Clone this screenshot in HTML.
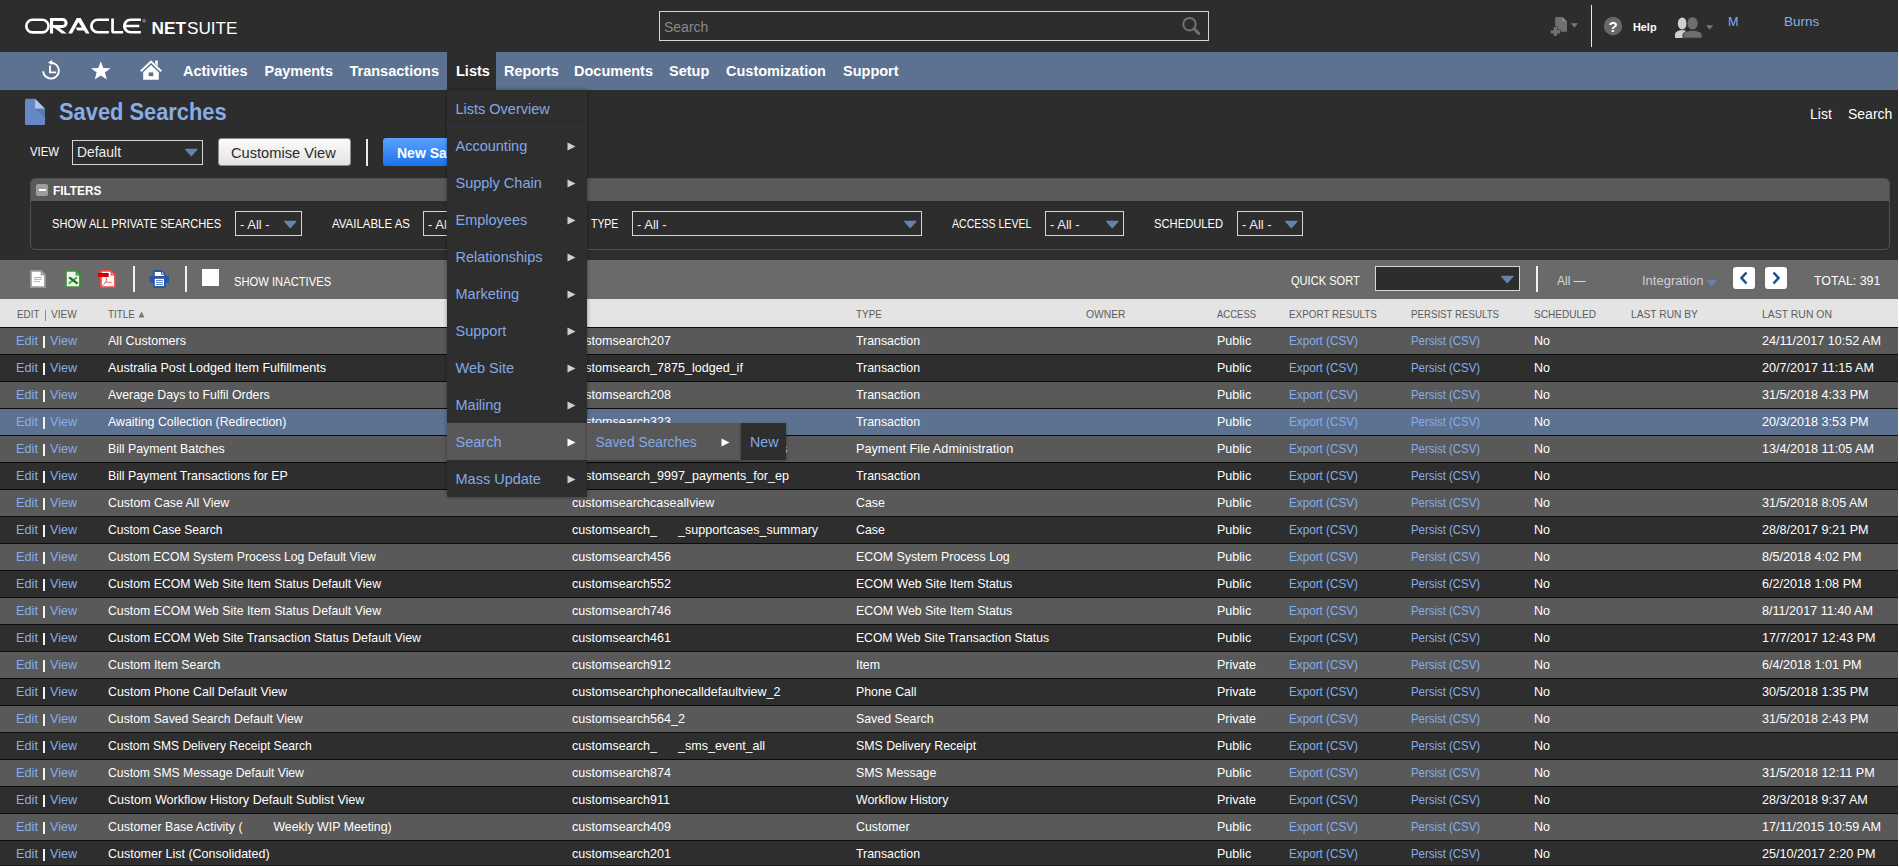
<!DOCTYPE html>
<html><head><meta charset="utf-8"><title>Saved Searches</title>
<style>
html,body{margin:0;padding:0}
body{width:1899px;height:867px;overflow:hidden;position:relative;background:#2d2d2d;font-family:'Liberation Sans', sans-serif}
.t{position:absolute;white-space:pre}
.r{position:absolute;box-sizing:content-box}
</style></head><body>
<svg class="r" style="left:0;top:0" width="260" height="52" viewBox="0 0 260 52">
<rect x="26.3" y="19.8" width="22.2" height="12.6" rx="6.3" fill="none" stroke="#fff" stroke-width="2.6"/>
<g fill="#fff">
<path fill-rule="evenodd" d="M50 18H62.55A5.05 5.05 0 0 1 62.55 28.1H53.1V33.4H50z M53.1 21V25.1H62.55A2.05 2.05 0 0 0 62.55 21z"/>
<path d="M54.6 28.1H59.5L66.8 33.4H61.8z"/>
<path d="M68.2 33.4L76.8 18H80.7L89.5 33.4H85.9L78.4 22L72.1 33.4z"/>
<path d="M75.7 27.6H82.5L84.5 30.6H77.3z"/>
<path d="M108.9 18.5h-11.4a7.5 7.5 0 0 0 0 15h11.4v-2.6h-11.2a4.9 4.9 0 0 1 0 -9.8h11.2z"/>
<path d="M111.2 18.5h2.7v12.4h9.2v2.6h-9.9a2 2 0 0 1 -2 -2z"/>
<path d="M140.9 18.5h-10.5a7.5 7.5 0 0 0 0 15h10.5v-2.6h-10.2a4.9 4.9 0 0 1 -4.6 -3.7h13.2v-2.4h-13.2a4.9 4.9 0 0 1 4.6 -3.7h10.2z"/>
</g>
<circle cx="144.1" cy="20.8" r="1.3" fill="none" stroke="#fff" stroke-width="0.5"/>
<text x="151.5" y="33.5" font-family="Liberation Sans" font-weight="bold" font-size="17.4" fill="#fff" textLength="34.5" lengthAdjust="spacingAndGlyphs">NET</text>
<text x="187" y="33.5" font-family="Liberation Sans" font-size="17.4" fill="#fff" textLength="50.5" lengthAdjust="spacingAndGlyphs">SUITE</text>
</svg>
<div class="r" style="left:659px;top:11px;width:548px;height:28px;background:transparent;border:1px solid #d6d6d6;"></div>
<div class="t" style="left:664px;top:20px;font-size:14px;line-height:14px;color:#8a8a8a;font-weight:normal;">Search</div>
<svg class="r" style="left:1180px;top:15px" width="22" height="22" viewBox="0 0 22 22">
<circle cx="9.5" cy="9.2" r="6.2" fill="none" stroke="#727272" stroke-width="2"/>
<path d="M14 13.7l4.8 4.8" stroke="#727272" stroke-width="3" stroke-linecap="round"/></svg>
<svg class="r" style="left:1548px;top:14px" width="34" height="26" viewBox="0 0 34 26">
<path d="M7.2 3h7.2l4.6 4.6v10.1h-11.8z" fill="#707070"/>
<path d="M14.4 3v4.6h4.6z" fill="#8c8c8c"/>
<path d="M5.7 12.5h3.9v3.2h3.3v4.1h-3.3v2.5h-3.9v-2.5h-3.3v-4.1h3.3z" fill="#2d2d2d"/>
<path d="M5.7 13h3.3v3.3h3.2v3.2h-3.2v2.5h-3.3v-2.5h-3v-3.2h3z" fill="#707070"/>
<path d="M22.8 9.2h7.2l-3.6 4.6z" fill="#777"/>
</svg>
<div class="r" style="left:1591px;top:5px;width:1px;height:42px;background:#e8e8e8;"></div>
<svg class="r" style="left:1603px;top:16px" width="20" height="20" viewBox="0 0 20 20">
<circle cx="10" cy="10" r="9.2" fill="#686868"/>
<text x="10" y="15.5" text-anchor="middle" font-family="Liberation Sans" font-weight="bold" font-size="15" fill="#fff">?</text></svg>
<div class="t" style="left:1633px;top:22px;font-size:11.2px;line-height:11.2px;color:#fff;font-weight:bold;transform:scaleX(0.97);transform-origin:0 0;">Help</div>
<svg class="r" style="left:1674px;top:16px" width="42" height="24" viewBox="0 0 42 24">
<ellipse cx="8.2" cy="7.4" rx="4.4" ry="6" fill="#d0d0d0"/>
<path d="M1 22v-3.6c0-2.4 3-4.2 7.2-4.2s6.5 1.8 6.5 4v3.8z" fill="#d0d0d0"/>
<ellipse cx="18.6" cy="7.4" rx="5.6" ry="6.6" fill="#6e6e6e" stroke="#2d2d2d" stroke-width="0.9"/>
<path d="M9 22.2v-3.4c0-2.6 4.4-4.4 9.6-4.4s9.6 1.8 9.6 4.4v3.4z" fill="#6e6e6e" stroke="#2d2d2d" stroke-width="0.9"/>
<path d="M32 9.2h7.2l-3.6 4.6z" fill="#777"/>
</svg>
<div class="t" style="left:1728px;top:16px;font-size:12.6px;line-height:12.6px;color:#84aeec;font-weight:normal;">M</div>
<div class="t" style="left:1784px;top:16px;font-size:12.6px;line-height:12.6px;color:#84aeec;font-weight:normal;transform:scaleX(1.07);transform-origin:0 0;">Burns</div>
<div class="r" style="left:0px;top:52px;width:1899px;height:38px;background:#5d7290;"></div>
<div class="r" style="left:447px;top:52px;width:49px;height:38px;background:#2d2d2d;"></div>
<svg class="r" style="left:38px;top:57px" width="26" height="26" viewBox="0 0 26 26">
<path d="M5.1 14.2A7.9 7.9 0 1 0 13 5.8" fill="none" stroke="#fff" stroke-width="1.9"/>
<path d="M10 5.5l4.2 -2.4v4.8z" fill="#fff"/>
<path d="M12 8.5v6.9h6.2" fill="none" stroke="#fff" stroke-width="1.9"/>
</svg>
<svg class="r" style="left:90px;top:60px" width="22" height="22" viewBox="0 0 22 22">
<path d="M10.8 1.2L13.3 8.0L20.6 8.2L14.9 12.6L16.9 19.6L10.8 15.6L4.7 19.6L6.7 12.6L1.0 8.2L8.3 8.0Z" fill="#fff"/></svg>
<svg class="r" style="left:139px;top:59px" width="24" height="23" viewBox="0 0 24 23">
<path d="M1.8 12.2l10.2 -9.6 10.2 9.6" fill="none" stroke="#fff" stroke-width="2"/>
<path d="M16.2 1.6h2.6v5.4l-2.6 -2.4z" fill="#fff"/>
<path d="M4.2 13.2v7.6h15.6v-7.6l-7.8 -7.2z" fill="#fff"/>
<rect x="9.7" y="13.4" width="4.6" height="3.8" fill="#5d7290"/>
</svg>
<div class="t" style="left:183px;top:64px;font-size:14.5px;line-height:14.5px;color:#fff;font-weight:bold;">Activities</div>
<div class="t" style="left:264.5px;top:64px;font-size:14.5px;line-height:14.5px;color:#fff;font-weight:bold;">Payments</div>
<div class="t" style="left:349.5px;top:64px;font-size:14.5px;line-height:14.5px;color:#fff;font-weight:bold;">Transactions</div>
<div class="t" style="left:456px;top:64px;font-size:14.5px;line-height:14.5px;color:#fff;font-weight:bold;">Lists</div>
<div class="t" style="left:504px;top:64px;font-size:14.5px;line-height:14.5px;color:#fff;font-weight:bold;">Reports</div>
<div class="t" style="left:574px;top:64px;font-size:14.5px;line-height:14.5px;color:#fff;font-weight:bold;">Documents</div>
<div class="t" style="left:669px;top:64px;font-size:14.5px;line-height:14.5px;color:#fff;font-weight:bold;">Setup</div>
<div class="t" style="left:726px;top:64px;font-size:14.5px;line-height:14.5px;color:#fff;font-weight:bold;">Customization</div>
<div class="t" style="left:843px;top:64px;font-size:14.5px;line-height:14.5px;color:#fff;font-weight:bold;">Support</div>
<svg class="r" style="left:24px;top:98px" width="24" height="28" viewBox="0 0 24 28">
<path d="M1 2.3a1.5 1.5 0 0 1 1.5 -1.5h8.6l9.9 9.9v14.8a1.5 1.5 0 0 1 -1.5 1.5h-17a1.5 1.5 0 0 1 -1.5 -1.5z" fill="#6689c6"/>
<path d="M11.1 0.8L21 10.7H11.1z" fill="#b3c4e6"/>
<path d="M11.1 10.7H21V19.6z" fill="#5878b0"/>
</svg>
<div class="t" style="left:59px;top:101px;font-size:23.5px;line-height:23.5px;color:#88ace6;font-weight:bold;transform:scaleX(0.93);transform-origin:0 0;">Saved Searches</div>
<div class="t" style="left:1810px;top:107px;font-size:14px;line-height:14px;color:#fff;font-weight:normal;">List</div>
<div class="t" style="left:1848px;top:107px;font-size:14px;line-height:14px;color:#fff;font-weight:normal;">Search</div>
<div class="t" style="left:30px;top:146px;font-size:12.6px;line-height:12.6px;color:#fff;font-weight:normal;transform:scaleX(0.9);transform-origin:0 0;">VIEW</div>
<div class="r" style="left:72px;top:140px;width:129px;height:23px;background:#2d2d2d;border:1px solid #d6d6d6;"></div>
<div class="t" style="left:77px;top:146px;font-size:13.9px;line-height:13.9px;color:#eee;font-weight:normal;">Default</div>
<svg class="r" style="left:184px;top:148px" width="14" height="9" viewBox="0 0 14 9"><path d="M1 0.8h12a0.6 0.6 0 0 1 0.4 1l-5.6 6.2a0.7 0.7 0 0 1 -1 0l-5.6 -6.2a0.6 0.6 0 0 1 0.4 -1z" fill="#6683b0" transform="scale(1.000,1.000)"/></svg>
<div class="r" style="left:218px;top:138px;width:131px;height:26px;background:linear-gradient(#fbfbfb,#e3e3e3);border:1px solid #8d8d8d;border-radius:3px;"></div>
<div class="t" style="left:231px;top:146px;font-size:14.5px;line-height:14.5px;color:#2a2a2a;font-weight:normal;transform:scaleX(1.01);transform-origin:0 0;">Customise View</div>
<div class="r" style="left:366px;top:139px;width:2px;height:27px;background:#eaeaea;"></div>
<div class="r" style="left:383px;top:138px;width:80px;height:28px;background:linear-gradient(#5aa2ff,#1c72ea);border-radius:3px;"></div>
<div class="t" style="left:397px;top:146px;font-size:14px;line-height:14px;color:#fff;font-weight:bold;">New Saved Search</div>
<div class="r" style="left:30px;top:178px;width:1858px;height:70px;background:#2d2d2d;border:1px solid #505050;border-radius:5px;"></div>
<div class="r" style="left:31px;top:179px;width:1858px;height:22px;background:#5a5a5a;border-radius:4px 4px 0 0;"></div>
<div class="r" style="left:36px;top:184px;width:12px;height:12px;background:#9c9c9c;border-radius:2px;"></div>
<div class="r" style="left:38.5px;top:189px;width:7px;height:2px;background:#fff;"></div>
<div class="t" style="left:53px;top:185px;font-size:12.6px;line-height:12.6px;color:#fff;font-weight:bold;transform:scaleX(0.94);transform-origin:0 0;">FILTERS</div>
<div class="t" style="left:51.6px;top:218px;font-size:12.6px;line-height:12.6px;color:#fff;font-weight:normal;transform:scaleX(0.88);transform-origin:0 0;">SHOW ALL PRIVATE SEARCHES</div>
<div class="r" style="left:235px;top:211px;width:65px;height:23px;background:#2d2d2d;border:1px solid #d6d6d6;"></div>
<div class="t" style="left:240px;top:218px;font-size:13px;line-height:13px;color:#eee;font-weight:normal;">- All -</div>
<svg class="r" style="left:283px;top:220px" width="14" height="9" viewBox="0 0 14 9"><path d="M1 0.8h12a0.6 0.6 0 0 1 0.4 1l-5.6 6.2a0.7 0.7 0 0 1 -1 0l-5.6 -6.2a0.6 0.6 0 0 1 0.4 -1z" fill="#6683b0" transform="scale(1.000,1.000)"/></svg>
<div class="t" style="left:332px;top:218px;font-size:12.6px;line-height:12.6px;color:#fff;font-weight:normal;transform:scaleX(0.91);transform-origin:0 0;">AVAILABLE AS</div>
<div class="r" style="left:423px;top:211px;width:78px;height:23px;background:#2d2d2d;border:1px solid #d6d6d6;"></div>
<div class="t" style="left:428px;top:218px;font-size:13px;line-height:13px;color:#eee;font-weight:normal;">- All -</div>
<svg class="r" style="left:484px;top:220px" width="14" height="9" viewBox="0 0 14 9"><path d="M1 0.8h12a0.6 0.6 0 0 1 0.4 1l-5.6 6.2a0.7 0.7 0 0 1 -1 0l-5.6 -6.2a0.6 0.6 0 0 1 0.4 -1z" fill="#6683b0" transform="scale(1.000,1.000)"/></svg>
<div class="t" style="left:591px;top:218px;font-size:12.6px;line-height:12.6px;color:#fff;font-weight:normal;transform:scaleX(0.83);transform-origin:0 0;">TYPE</div>
<div class="r" style="left:632px;top:211px;width:288px;height:23px;background:#2d2d2d;border:1px solid #d6d6d6;"></div>
<div class="t" style="left:637px;top:218px;font-size:13px;line-height:13px;color:#eee;font-weight:normal;">- All -</div>
<svg class="r" style="left:903px;top:220px" width="14" height="9" viewBox="0 0 14 9"><path d="M1 0.8h12a0.6 0.6 0 0 1 0.4 1l-5.6 6.2a0.7 0.7 0 0 1 -1 0l-5.6 -6.2a0.6 0.6 0 0 1 0.4 -1z" fill="#6683b0" transform="scale(1.000,1.000)"/></svg>
<div class="t" style="left:952px;top:218px;font-size:12.6px;line-height:12.6px;color:#fff;font-weight:normal;transform:scaleX(0.84);transform-origin:0 0;">ACCESS LEVEL</div>
<div class="r" style="left:1045px;top:211px;width:77px;height:23px;background:#2d2d2d;border:1px solid #d6d6d6;"></div>
<div class="t" style="left:1050px;top:218px;font-size:13px;line-height:13px;color:#eee;font-weight:normal;">- All -</div>
<svg class="r" style="left:1105px;top:220px" width="14" height="9" viewBox="0 0 14 9"><path d="M1 0.8h12a0.6 0.6 0 0 1 0.4 1l-5.6 6.2a0.7 0.7 0 0 1 -1 0l-5.6 -6.2a0.6 0.6 0 0 1 0.4 -1z" fill="#6683b0" transform="scale(1.000,1.000)"/></svg>
<div class="t" style="left:1154px;top:218px;font-size:12.6px;line-height:12.6px;color:#fff;font-weight:normal;transform:scaleX(0.89);transform-origin:0 0;">SCHEDULED</div>
<div class="r" style="left:1237px;top:211px;width:64px;height:23px;background:#2d2d2d;border:1px solid #d6d6d6;"></div>
<div class="t" style="left:1242px;top:218px;font-size:13px;line-height:13px;color:#eee;font-weight:normal;">- All -</div>
<svg class="r" style="left:1284px;top:220px" width="14" height="9" viewBox="0 0 14 9"><path d="M1 0.8h12a0.6 0.6 0 0 1 0.4 1l-5.6 6.2a0.7 0.7 0 0 1 -1 0l-5.6 -6.2a0.6 0.6 0 0 1 0.4 -1z" fill="#6683b0" transform="scale(1.000,1.000)"/></svg>
<div class="r" style="left:0px;top:260px;width:1898px;height:39px;background:#6a6a6a;"></div>
<svg class="r" style="left:29px;top:269px" width="20" height="21" viewBox="0 0 20 21">
<path d="M1.9 1.9h10.2l3.9 3.9v12.3h-14.1z" fill="#fff" stroke="#999" stroke-width="1.8"/>
<path d="M12.2 1.9v3.9h3.9" fill="none" stroke="#999" stroke-width="1.2"/>
<path d="M5 8.5h7.8M5 10.4h7.8M5 12.5h6" stroke="#aaa" stroke-width="0.9"/></svg>
<svg class="r" style="left:64px;top:269px" width="20" height="21" viewBox="0 0 20 21">
<path d="M1.9 1.9h10.2l3.9 3.9v12.3h-14.1z" fill="#eef5e6" stroke="#3e8e3e" stroke-width="1.8"/>
<path d="M12.2 1.9v3.9h3.9" fill="none" stroke="#3e8e3e" stroke-width="1.2"/>
<path d="M4.7 14.6L13 8.3" stroke="#55b055" stroke-width="2"/>
<path d="M5.2 8.3L13.6 14.6" stroke="#1e6e1e" stroke-width="2.3"/></svg>
<svg class="r" style="left:97px;top:269px" width="22" height="21" viewBox="0 0 22 21">
<path d="M3.9 1.9h10.2l3.9 3.9v12.3h-14.1z" fill="#fff" stroke="#f04848" stroke-width="1.8"/>
<path d="M14.2 1.9v3.9h3.9" fill="none" stroke="#f04848" stroke-width="1.2"/>
<rect x="0.9" y="4" width="10.8" height="4" fill="#d40000"/>
<path d="M9.2 8.5c0.5 2 0 4 -1.2 5.5c-1 1.2 -2 2 -2.8 2.8M8.2 13.2c1.5 -0.3 3.5 0 6.2 0.6" fill="none" stroke="#e83a3a" stroke-width="0.9"/></svg>
<div class="r" style="left:133px;top:266px;width:2px;height:26px;background:#f0f0f0;"></div>
<svg class="r" style="left:149px;top:269px" width="22" height="21" viewBox="0 0 22 21">
<path d="M4 0.9h8.8l4.1 4.1v3h-12.9z" fill="#2a57a5"/>
<path d="M5.8 3h7.2l2 2v2.4h-9.2z" fill="#fff"/>
<path d="M12.6 2.4v2.9h2.9" fill="none" stroke="#2a57a5" stroke-width="1"/>
<rect x="0.8" y="7" width="19.2" height="7" fill="#2a57a5"/>
<rect x="4" y="9.8" width="12.9" height="9.2" fill="#2a57a5"/>
<rect x="5.8" y="9.8" width="9.2" height="7.2" fill="#fff"/>
<path d="M7 11.4h7M7 13.4h7M7 15.4h7" stroke="#4a72b8" stroke-width="0.9"/></svg>
<div class="r" style="left:185px;top:266px;width:2px;height:26px;background:#f0f0f0;"></div>
<div class="r" style="left:202px;top:269px;width:17px;height:17px;background:#fff;"></div>
<div class="t" style="left:234px;top:276px;font-size:12.6px;line-height:12.6px;color:#fff;font-weight:normal;transform:scaleX(0.89);transform-origin:0 0;">SHOW INACTIVES</div>
<div class="t" style="left:1291px;top:275px;font-size:12.6px;line-height:12.6px;color:#fff;font-weight:normal;transform:scaleX(0.88);transform-origin:0 0;">QUICK SORT</div>
<div class="r" style="left:1375px;top:266px;width:143px;height:23px;background:#2d2d2d;border:1px solid #d6d6d6;"></div>
<svg class="r" style="left:1500px;top:275px" width="14" height="9" viewBox="0 0 14 9"><path d="M1 0.8h12a0.6 0.6 0 0 1 0.4 1l-5.6 6.2a0.7 0.7 0 0 1 -1 0l-5.6 -6.2a0.6 0.6 0 0 1 0.4 -1z" fill="#6683b0" transform="scale(1.000,1.000)"/></svg>
<div class="r" style="left:1536px;top:266px;width:2px;height:26px;background:#f0f0f0;"></div>
<div class="t" style="left:1557px;top:274px;font-size:13px;line-height:13px;color:#d8d8d8;font-weight:normal;transform:scaleX(0.92);transform-origin:0 0;">All —</div>
<div class="t" style="left:1642px;top:274px;font-size:13px;line-height:13px;color:#cfd0d8;font-weight:normal;">Integration</div>
<svg class="r" style="left:1707px;top:279px" width="12" height="8" viewBox="0 0 12 8"><path d="M1 0.8h10a0.6 0.6 0 0 1 0.4 1l-5.6 6.2a0.7 0.7 0 0 1 -1 0l-5.6 -6.2a0.6 0.6 0 0 1 0.4 -1z" fill="#6683b0" transform="scale(0.846,0.875)"/></svg>
<div class="r" style="left:1733px;top:267px;width:22px;height:22px;background:#fff;border-radius:3px;"></div>
<div class="r" style="left:1765px;top:267px;width:22px;height:22px;background:#fff;border-radius:3px;"></div>
<svg class="r" style="left:1733px;top:267px" width="22" height="22" viewBox="0 0 22 22"><path d="M13.5 5.5l-5 5.5 5 5.5" fill="none" stroke="#1f4f9c" stroke-width="2.6"/></svg>
<svg class="r" style="left:1765px;top:267px" width="22" height="22" viewBox="0 0 22 22"><path d="M8.5 5.5l5 5.5 -5 5.5" fill="none" stroke="#1f4f9c" stroke-width="2.6"/></svg>
<div class="t" style="left:1814px;top:275px;font-size:12.6px;line-height:12.6px;color:#fff;font-weight:normal;transform:scaleX(0.985);transform-origin:0 0;">TOTAL: 391</div>
<div class="r" style="left:0px;top:299px;width:1898px;height:28px;background:#e4e4e4;"></div>
<div class="r" style="left:0px;top:327px;width:1898px;height:1px;background:#0a0a0a;"></div>
<div class="t" style="left:16.5px;top:309px;font-size:11.2px;line-height:11.2px;color:#5c5c5c;font-weight:normal;transform:scaleX(0.88);transform-origin:0 0;">EDIT</div>
<div class="r" style="left:45px;top:310px;width:1px;height:11px;background:#8a8a9a;"></div>
<div class="t" style="left:51px;top:309px;font-size:11.2px;line-height:11.2px;color:#5c5c5c;font-weight:normal;transform:scaleX(0.9);transform-origin:0 0;">VIEW</div>
<div class="t" style="left:108px;top:309px;font-size:11.2px;line-height:11.2px;color:#5c5c5c;font-weight:normal;transform:scaleX(0.885);transform-origin:0 0;">TITLE</div>
<svg class="r" style="left:138px;top:311px" width="7" height="7" viewBox="0 0 7 7"><path d="M3.5 0.5l3 6h-6z" fill="#777"/></svg>
<div class="t" style="left:572px;top:309px;font-size:11.2px;line-height:11.2px;color:#5c5c5c;font-weight:normal;transform:scaleX(0.89);transform-origin:0 0;">ID</div>
<div class="t" style="left:856px;top:309px;font-size:11.2px;line-height:11.2px;color:#5c5c5c;font-weight:normal;transform:scaleX(0.89);transform-origin:0 0;">TYPE</div>
<div class="t" style="left:1086px;top:309px;font-size:11.2px;line-height:11.2px;color:#5c5c5c;font-weight:normal;transform:scaleX(0.92);transform-origin:0 0;">OWNER</div>
<div class="t" style="left:1217px;top:309px;font-size:11.2px;line-height:11.2px;color:#5c5c5c;font-weight:normal;transform:scaleX(0.85);transform-origin:0 0;">ACCESS</div>
<div class="t" style="left:1289px;top:309px;font-size:11.2px;line-height:11.2px;color:#5c5c5c;font-weight:normal;transform:scaleX(0.884);transform-origin:0 0;">EXPORT RESULTS</div>
<div class="t" style="left:1411px;top:309px;font-size:11.2px;line-height:11.2px;color:#5c5c5c;font-weight:normal;transform:scaleX(0.867);transform-origin:0 0;">PERSIST RESULTS</div>
<div class="t" style="left:1534px;top:309px;font-size:11.2px;line-height:11.2px;color:#5c5c5c;font-weight:normal;transform:scaleX(0.9);transform-origin:0 0;">SCHEDULED</div>
<div class="t" style="left:1631px;top:309px;font-size:11.2px;line-height:11.2px;color:#5c5c5c;font-weight:normal;transform:scaleX(0.915);transform-origin:0 0;">LAST RUN BY</div>
<div class="t" style="left:1762px;top:309px;font-size:11.2px;line-height:11.2px;color:#5c5c5c;font-weight:normal;transform:scaleX(0.933);transform-origin:0 0;">LAST RUN ON</div>
<div class="r" style="left:0px;top:328px;width:1898px;height:26px;background:#595959;"></div>
<div class="r" style="left:0px;top:354px;width:1898px;height:1px;background:#0b0b0b;"></div>
<div class="t" style="left:16px;top:334px;font-size:13px;line-height:13px;color:#84aeec;font-weight:normal;transform:scaleX(0.98);transform-origin:0 0;">Edit</div>
<div class="r" style="left:43.2px;top:336px;width:1.6px;height:12px;background:#f2f2f2;"></div>
<div class="t" style="left:50px;top:334px;font-size:13px;line-height:13px;color:#84aeec;font-weight:normal;transform:scaleX(0.97);transform-origin:0 0;">View</div>
<div class="t" style="left:108px;top:334px;font-size:13px;line-height:13px;color:#fff;font-weight:normal;transform:scaleX(0.964);transform-origin:0 0;">All Customers</div>
<div class="t" style="left:572px;top:334px;font-size:13px;line-height:13px;color:#fff;font-weight:normal;transform:scaleX(0.965);transform-origin:0 0;">customsearch207</div>
<div class="t" style="left:856px;top:334px;font-size:13px;line-height:13px;color:#fff;font-weight:normal;transform:scaleX(0.95);transform-origin:0 0;">Transaction</div>
<div class="t" style="left:1217px;top:334px;font-size:13px;line-height:13px;color:#fff;font-weight:normal;transform:scaleX(0.965);transform-origin:0 0;">Public</div>
<div class="t" style="left:1289px;top:334px;font-size:13px;line-height:13px;color:#84aeec;font-weight:normal;transform:scaleX(0.9);transform-origin:0 0;">Export (CSV)</div>
<div class="t" style="left:1411px;top:334px;font-size:13px;line-height:13px;color:#84aeec;font-weight:normal;transform:scaleX(0.877);transform-origin:0 0;">Persist (CSV)</div>
<div class="t" style="left:1534px;top:334px;font-size:13px;line-height:13px;color:#fff;font-weight:normal;transform:scaleX(0.965);transform-origin:0 0;">No</div>
<div class="t" style="left:1762px;top:334px;font-size:13px;line-height:13px;color:#fff;font-weight:normal;transform:scaleX(0.97);transform-origin:0 0;">24/11/2017 10:52 AM</div>
<div class="r" style="left:0px;top:355px;width:1898px;height:26px;background:#2e2e2e;"></div>
<div class="r" style="left:0px;top:381px;width:1898px;height:1px;background:#0b0b0b;"></div>
<div class="t" style="left:16px;top:361px;font-size:13px;line-height:13px;color:#84aeec;font-weight:normal;transform:scaleX(0.98);transform-origin:0 0;">Edit</div>
<div class="r" style="left:43.2px;top:363px;width:1.6px;height:12px;background:#f2f2f2;"></div>
<div class="t" style="left:50px;top:361px;font-size:13px;line-height:13px;color:#84aeec;font-weight:normal;transform:scaleX(0.97);transform-origin:0 0;">View</div>
<div class="t" style="left:108px;top:361px;font-size:13px;line-height:13px;color:#fff;font-weight:normal;transform:scaleX(0.967);transform-origin:0 0;">Australia Post Lodged Item Fulfillments</div>
<div class="t" style="left:572px;top:361px;font-size:13px;line-height:13px;color:#fff;font-weight:normal;transform:scaleX(0.965);transform-origin:0 0;">customsearch_7875_lodged_if</div>
<div class="t" style="left:856px;top:361px;font-size:13px;line-height:13px;color:#fff;font-weight:normal;transform:scaleX(0.95);transform-origin:0 0;">Transaction</div>
<div class="t" style="left:1217px;top:361px;font-size:13px;line-height:13px;color:#fff;font-weight:normal;transform:scaleX(0.965);transform-origin:0 0;">Public</div>
<div class="t" style="left:1289px;top:361px;font-size:13px;line-height:13px;color:#84aeec;font-weight:normal;transform:scaleX(0.9);transform-origin:0 0;">Export (CSV)</div>
<div class="t" style="left:1411px;top:361px;font-size:13px;line-height:13px;color:#84aeec;font-weight:normal;transform:scaleX(0.877);transform-origin:0 0;">Persist (CSV)</div>
<div class="t" style="left:1534px;top:361px;font-size:13px;line-height:13px;color:#fff;font-weight:normal;transform:scaleX(0.965);transform-origin:0 0;">No</div>
<div class="t" style="left:1762px;top:361px;font-size:13px;line-height:13px;color:#fff;font-weight:normal;transform:scaleX(0.97);transform-origin:0 0;">20/7/2017 11:15 AM</div>
<div class="r" style="left:0px;top:382px;width:1898px;height:26px;background:#595959;"></div>
<div class="r" style="left:0px;top:408px;width:1898px;height:1px;background:#0b0b0b;"></div>
<div class="t" style="left:16px;top:388px;font-size:13px;line-height:13px;color:#84aeec;font-weight:normal;transform:scaleX(0.98);transform-origin:0 0;">Edit</div>
<div class="r" style="left:43.2px;top:390px;width:1.6px;height:12px;background:#f2f2f2;"></div>
<div class="t" style="left:50px;top:388px;font-size:13px;line-height:13px;color:#84aeec;font-weight:normal;transform:scaleX(0.97);transform-origin:0 0;">View</div>
<div class="t" style="left:108px;top:388px;font-size:13px;line-height:13px;color:#fff;font-weight:normal;transform:scaleX(0.95);transform-origin:0 0;">Average Days to Fulfil Orders</div>
<div class="t" style="left:572px;top:388px;font-size:13px;line-height:13px;color:#fff;font-weight:normal;transform:scaleX(0.965);transform-origin:0 0;">customsearch208</div>
<div class="t" style="left:856px;top:388px;font-size:13px;line-height:13px;color:#fff;font-weight:normal;transform:scaleX(0.95);transform-origin:0 0;">Transaction</div>
<div class="t" style="left:1217px;top:388px;font-size:13px;line-height:13px;color:#fff;font-weight:normal;transform:scaleX(0.965);transform-origin:0 0;">Public</div>
<div class="t" style="left:1289px;top:388px;font-size:13px;line-height:13px;color:#84aeec;font-weight:normal;transform:scaleX(0.9);transform-origin:0 0;">Export (CSV)</div>
<div class="t" style="left:1411px;top:388px;font-size:13px;line-height:13px;color:#84aeec;font-weight:normal;transform:scaleX(0.877);transform-origin:0 0;">Persist (CSV)</div>
<div class="t" style="left:1534px;top:388px;font-size:13px;line-height:13px;color:#fff;font-weight:normal;transform:scaleX(0.965);transform-origin:0 0;">No</div>
<div class="t" style="left:1762px;top:388px;font-size:13px;line-height:13px;color:#fff;font-weight:normal;transform:scaleX(0.97);transform-origin:0 0;">31/5/2018 4:33 PM</div>
<div class="r" style="left:0px;top:409px;width:1898px;height:26px;background:#5d7290;"></div>
<div class="r" style="left:0px;top:435px;width:1898px;height:1px;background:#0b0b0b;"></div>
<div class="t" style="left:16px;top:415px;font-size:13px;line-height:13px;color:#84aeec;font-weight:normal;transform:scaleX(0.98);transform-origin:0 0;">Edit</div>
<div class="r" style="left:43.2px;top:417px;width:1.6px;height:12px;background:#f2f2f2;"></div>
<div class="t" style="left:50px;top:415px;font-size:13px;line-height:13px;color:#84aeec;font-weight:normal;transform:scaleX(0.97);transform-origin:0 0;">View</div>
<div class="t" style="left:108px;top:415px;font-size:13px;line-height:13px;color:#fff;font-weight:normal;transform:scaleX(0.95);transform-origin:0 0;">Awaiting Collection (Redirection)</div>
<div class="t" style="left:572px;top:415px;font-size:13px;line-height:13px;color:#fff;font-weight:normal;transform:scaleX(0.965);transform-origin:0 0;">customsearch323</div>
<div class="t" style="left:856px;top:415px;font-size:13px;line-height:13px;color:#fff;font-weight:normal;transform:scaleX(0.95);transform-origin:0 0;">Transaction</div>
<div class="t" style="left:1217px;top:415px;font-size:13px;line-height:13px;color:#fff;font-weight:normal;transform:scaleX(0.965);transform-origin:0 0;">Public</div>
<div class="t" style="left:1289px;top:415px;font-size:13px;line-height:13px;color:#84aeec;font-weight:normal;transform:scaleX(0.9);transform-origin:0 0;">Export (CSV)</div>
<div class="t" style="left:1411px;top:415px;font-size:13px;line-height:13px;color:#84aeec;font-weight:normal;transform:scaleX(0.877);transform-origin:0 0;">Persist (CSV)</div>
<div class="t" style="left:1534px;top:415px;font-size:13px;line-height:13px;color:#fff;font-weight:normal;transform:scaleX(0.965);transform-origin:0 0;">No</div>
<div class="t" style="left:1762px;top:415px;font-size:13px;line-height:13px;color:#fff;font-weight:normal;transform:scaleX(0.97);transform-origin:0 0;">20/3/2018 3:53 PM</div>
<div class="r" style="left:0px;top:436px;width:1898px;height:26px;background:#595959;"></div>
<div class="r" style="left:0px;top:462px;width:1898px;height:1px;background:#0b0b0b;"></div>
<div class="t" style="left:16px;top:442px;font-size:13px;line-height:13px;color:#84aeec;font-weight:normal;transform:scaleX(0.98);transform-origin:0 0;">Edit</div>
<div class="r" style="left:43.2px;top:444px;width:1.6px;height:12px;background:#f2f2f2;"></div>
<div class="t" style="left:50px;top:442px;font-size:13px;line-height:13px;color:#84aeec;font-weight:normal;transform:scaleX(0.97);transform-origin:0 0;">View</div>
<div class="t" style="left:108px;top:442px;font-size:13px;line-height:13px;color:#fff;font-weight:normal;transform:scaleX(0.95);transform-origin:0 0;">Bill Payment Batches</div>
<div class="t" style="left:572px;top:442px;font-size:13px;line-height:13px;color:#fff;font-weight:normal;transform:scaleX(0.948);transform-origin:0 0;">customsearch_9997_payment_batches</div>
<div class="t" style="left:856px;top:442px;font-size:13px;line-height:13px;color:#fff;font-weight:normal;transform:scaleX(0.976);transform-origin:0 0;">Payment File Administration</div>
<div class="t" style="left:1217px;top:442px;font-size:13px;line-height:13px;color:#fff;font-weight:normal;transform:scaleX(0.965);transform-origin:0 0;">Public</div>
<div class="t" style="left:1289px;top:442px;font-size:13px;line-height:13px;color:#84aeec;font-weight:normal;transform:scaleX(0.9);transform-origin:0 0;">Export (CSV)</div>
<div class="t" style="left:1411px;top:442px;font-size:13px;line-height:13px;color:#84aeec;font-weight:normal;transform:scaleX(0.877);transform-origin:0 0;">Persist (CSV)</div>
<div class="t" style="left:1534px;top:442px;font-size:13px;line-height:13px;color:#fff;font-weight:normal;transform:scaleX(0.965);transform-origin:0 0;">No</div>
<div class="t" style="left:1762px;top:442px;font-size:13px;line-height:13px;color:#fff;font-weight:normal;transform:scaleX(0.97);transform-origin:0 0;">13/4/2018 11:05 AM</div>
<div class="r" style="left:0px;top:463px;width:1898px;height:26px;background:#2e2e2e;"></div>
<div class="r" style="left:0px;top:489px;width:1898px;height:1px;background:#0b0b0b;"></div>
<div class="t" style="left:16px;top:469px;font-size:13px;line-height:13px;color:#84aeec;font-weight:normal;transform:scaleX(0.98);transform-origin:0 0;">Edit</div>
<div class="r" style="left:43.2px;top:471px;width:1.6px;height:12px;background:#f2f2f2;"></div>
<div class="t" style="left:50px;top:469px;font-size:13px;line-height:13px;color:#84aeec;font-weight:normal;transform:scaleX(0.97);transform-origin:0 0;">View</div>
<div class="t" style="left:108px;top:469px;font-size:13px;line-height:13px;color:#fff;font-weight:normal;transform:scaleX(0.95);transform-origin:0 0;">Bill Payment Transactions for EP</div>
<div class="t" style="left:572px;top:469px;font-size:13px;line-height:13px;color:#fff;font-weight:normal;transform:scaleX(0.965);transform-origin:0 0;">customsearch_9997_payments_for_ep</div>
<div class="t" style="left:856px;top:469px;font-size:13px;line-height:13px;color:#fff;font-weight:normal;transform:scaleX(0.95);transform-origin:0 0;">Transaction</div>
<div class="t" style="left:1217px;top:469px;font-size:13px;line-height:13px;color:#fff;font-weight:normal;transform:scaleX(0.965);transform-origin:0 0;">Public</div>
<div class="t" style="left:1289px;top:469px;font-size:13px;line-height:13px;color:#84aeec;font-weight:normal;transform:scaleX(0.9);transform-origin:0 0;">Export (CSV)</div>
<div class="t" style="left:1411px;top:469px;font-size:13px;line-height:13px;color:#84aeec;font-weight:normal;transform:scaleX(0.877);transform-origin:0 0;">Persist (CSV)</div>
<div class="t" style="left:1534px;top:469px;font-size:13px;line-height:13px;color:#fff;font-weight:normal;transform:scaleX(0.965);transform-origin:0 0;">No</div>
<div class="t" style="left:1762px;top:469px;font-size:13px;line-height:13px;color:#fff;font-weight:normal;transform:scaleX(0.97);transform-origin:0 0;"></div>
<div class="r" style="left:0px;top:490px;width:1898px;height:26px;background:#595959;"></div>
<div class="r" style="left:0px;top:516px;width:1898px;height:1px;background:#0b0b0b;"></div>
<div class="t" style="left:16px;top:496px;font-size:13px;line-height:13px;color:#84aeec;font-weight:normal;transform:scaleX(0.98);transform-origin:0 0;">Edit</div>
<div class="r" style="left:43.2px;top:498px;width:1.6px;height:12px;background:#f2f2f2;"></div>
<div class="t" style="left:50px;top:496px;font-size:13px;line-height:13px;color:#84aeec;font-weight:normal;transform:scaleX(0.97);transform-origin:0 0;">View</div>
<div class="t" style="left:108px;top:496px;font-size:13px;line-height:13px;color:#fff;font-weight:normal;transform:scaleX(0.95);transform-origin:0 0;">Custom Case All View</div>
<div class="t" style="left:572px;top:496px;font-size:13px;line-height:13px;color:#fff;font-weight:normal;transform:scaleX(0.965);transform-origin:0 0;">customsearchcaseallview</div>
<div class="t" style="left:856px;top:496px;font-size:13px;line-height:13px;color:#fff;font-weight:normal;transform:scaleX(0.95);transform-origin:0 0;">Case</div>
<div class="t" style="left:1217px;top:496px;font-size:13px;line-height:13px;color:#fff;font-weight:normal;transform:scaleX(0.965);transform-origin:0 0;">Public</div>
<div class="t" style="left:1289px;top:496px;font-size:13px;line-height:13px;color:#84aeec;font-weight:normal;transform:scaleX(0.9);transform-origin:0 0;">Export (CSV)</div>
<div class="t" style="left:1411px;top:496px;font-size:13px;line-height:13px;color:#84aeec;font-weight:normal;transform:scaleX(0.877);transform-origin:0 0;">Persist (CSV)</div>
<div class="t" style="left:1534px;top:496px;font-size:13px;line-height:13px;color:#fff;font-weight:normal;transform:scaleX(0.965);transform-origin:0 0;">No</div>
<div class="t" style="left:1762px;top:496px;font-size:13px;line-height:13px;color:#fff;font-weight:normal;transform:scaleX(0.97);transform-origin:0 0;">31/5/2018 8:05 AM</div>
<div class="r" style="left:0px;top:517px;width:1898px;height:26px;background:#2e2e2e;"></div>
<div class="r" style="left:0px;top:543px;width:1898px;height:1px;background:#0b0b0b;"></div>
<div class="t" style="left:16px;top:523px;font-size:13px;line-height:13px;color:#84aeec;font-weight:normal;transform:scaleX(0.98);transform-origin:0 0;">Edit</div>
<div class="r" style="left:43.2px;top:525px;width:1.6px;height:12px;background:#f2f2f2;"></div>
<div class="t" style="left:50px;top:523px;font-size:13px;line-height:13px;color:#84aeec;font-weight:normal;transform:scaleX(0.97);transform-origin:0 0;">View</div>
<div class="t" style="left:108px;top:523px;font-size:13px;line-height:13px;color:#fff;font-weight:normal;transform:scaleX(0.926);transform-origin:0 0;">Custom Case Search</div>
<div class="t" style="left:572px;top:523px;font-size:13px;line-height:13px;color:#fff;font-weight:normal;transform:scaleX(0.965);transform-origin:0 0;">customsearch_&nbsp;&nbsp;&nbsp;&nbsp;&nbsp;&nbsp;_supportcases_summary</div>
<div class="t" style="left:856px;top:523px;font-size:13px;line-height:13px;color:#fff;font-weight:normal;transform:scaleX(0.95);transform-origin:0 0;">Case</div>
<div class="t" style="left:1217px;top:523px;font-size:13px;line-height:13px;color:#fff;font-weight:normal;transform:scaleX(0.965);transform-origin:0 0;">Public</div>
<div class="t" style="left:1289px;top:523px;font-size:13px;line-height:13px;color:#84aeec;font-weight:normal;transform:scaleX(0.9);transform-origin:0 0;">Export (CSV)</div>
<div class="t" style="left:1411px;top:523px;font-size:13px;line-height:13px;color:#84aeec;font-weight:normal;transform:scaleX(0.877);transform-origin:0 0;">Persist (CSV)</div>
<div class="t" style="left:1534px;top:523px;font-size:13px;line-height:13px;color:#fff;font-weight:normal;transform:scaleX(0.965);transform-origin:0 0;">No</div>
<div class="t" style="left:1762px;top:523px;font-size:13px;line-height:13px;color:#fff;font-weight:normal;transform:scaleX(0.97);transform-origin:0 0;">28/8/2017 9:21 PM</div>
<div class="r" style="left:0px;top:544px;width:1898px;height:26px;background:#595959;"></div>
<div class="r" style="left:0px;top:570px;width:1898px;height:1px;background:#0b0b0b;"></div>
<div class="t" style="left:16px;top:550px;font-size:13px;line-height:13px;color:#84aeec;font-weight:normal;transform:scaleX(0.98);transform-origin:0 0;">Edit</div>
<div class="r" style="left:43.2px;top:552px;width:1.6px;height:12px;background:#f2f2f2;"></div>
<div class="t" style="left:50px;top:550px;font-size:13px;line-height:13px;color:#84aeec;font-weight:normal;transform:scaleX(0.97);transform-origin:0 0;">View</div>
<div class="t" style="left:108px;top:550px;font-size:13px;line-height:13px;color:#fff;font-weight:normal;transform:scaleX(0.934);transform-origin:0 0;">Custom ECOM System Process Log Default View</div>
<div class="t" style="left:572px;top:550px;font-size:13px;line-height:13px;color:#fff;font-weight:normal;transform:scaleX(0.965);transform-origin:0 0;">customsearch456</div>
<div class="t" style="left:856px;top:550px;font-size:13px;line-height:13px;color:#fff;font-weight:normal;transform:scaleX(0.95);transform-origin:0 0;">ECOM System Process Log</div>
<div class="t" style="left:1217px;top:550px;font-size:13px;line-height:13px;color:#fff;font-weight:normal;transform:scaleX(0.965);transform-origin:0 0;">Public</div>
<div class="t" style="left:1289px;top:550px;font-size:13px;line-height:13px;color:#84aeec;font-weight:normal;transform:scaleX(0.9);transform-origin:0 0;">Export (CSV)</div>
<div class="t" style="left:1411px;top:550px;font-size:13px;line-height:13px;color:#84aeec;font-weight:normal;transform:scaleX(0.877);transform-origin:0 0;">Persist (CSV)</div>
<div class="t" style="left:1534px;top:550px;font-size:13px;line-height:13px;color:#fff;font-weight:normal;transform:scaleX(0.965);transform-origin:0 0;">No</div>
<div class="t" style="left:1762px;top:550px;font-size:13px;line-height:13px;color:#fff;font-weight:normal;transform:scaleX(0.97);transform-origin:0 0;">8/5/2018 4:02 PM</div>
<div class="r" style="left:0px;top:571px;width:1898px;height:26px;background:#2e2e2e;"></div>
<div class="r" style="left:0px;top:597px;width:1898px;height:1px;background:#0b0b0b;"></div>
<div class="t" style="left:16px;top:577px;font-size:13px;line-height:13px;color:#84aeec;font-weight:normal;transform:scaleX(0.98);transform-origin:0 0;">Edit</div>
<div class="r" style="left:43.2px;top:579px;width:1.6px;height:12px;background:#f2f2f2;"></div>
<div class="t" style="left:50px;top:577px;font-size:13px;line-height:13px;color:#84aeec;font-weight:normal;transform:scaleX(0.97);transform-origin:0 0;">View</div>
<div class="t" style="left:108px;top:577px;font-size:13px;line-height:13px;color:#fff;font-weight:normal;transform:scaleX(0.944);transform-origin:0 0;">Custom ECOM Web Site Item Status Default View</div>
<div class="t" style="left:572px;top:577px;font-size:13px;line-height:13px;color:#fff;font-weight:normal;transform:scaleX(0.965);transform-origin:0 0;">customsearch552</div>
<div class="t" style="left:856px;top:577px;font-size:13px;line-height:13px;color:#fff;font-weight:normal;transform:scaleX(0.95);transform-origin:0 0;">ECOM Web Site Item Status</div>
<div class="t" style="left:1217px;top:577px;font-size:13px;line-height:13px;color:#fff;font-weight:normal;transform:scaleX(0.965);transform-origin:0 0;">Public</div>
<div class="t" style="left:1289px;top:577px;font-size:13px;line-height:13px;color:#84aeec;font-weight:normal;transform:scaleX(0.9);transform-origin:0 0;">Export (CSV)</div>
<div class="t" style="left:1411px;top:577px;font-size:13px;line-height:13px;color:#84aeec;font-weight:normal;transform:scaleX(0.877);transform-origin:0 0;">Persist (CSV)</div>
<div class="t" style="left:1534px;top:577px;font-size:13px;line-height:13px;color:#fff;font-weight:normal;transform:scaleX(0.965);transform-origin:0 0;">No</div>
<div class="t" style="left:1762px;top:577px;font-size:13px;line-height:13px;color:#fff;font-weight:normal;transform:scaleX(0.97);transform-origin:0 0;">6/2/2018 1:08 PM</div>
<div class="r" style="left:0px;top:598px;width:1898px;height:26px;background:#595959;"></div>
<div class="r" style="left:0px;top:624px;width:1898px;height:1px;background:#0b0b0b;"></div>
<div class="t" style="left:16px;top:604px;font-size:13px;line-height:13px;color:#84aeec;font-weight:normal;transform:scaleX(0.98);transform-origin:0 0;">Edit</div>
<div class="r" style="left:43.2px;top:606px;width:1.6px;height:12px;background:#f2f2f2;"></div>
<div class="t" style="left:50px;top:604px;font-size:13px;line-height:13px;color:#84aeec;font-weight:normal;transform:scaleX(0.97);transform-origin:0 0;">View</div>
<div class="t" style="left:108px;top:604px;font-size:13px;line-height:13px;color:#fff;font-weight:normal;transform:scaleX(0.944);transform-origin:0 0;">Custom ECOM Web Site Item Status Default View</div>
<div class="t" style="left:572px;top:604px;font-size:13px;line-height:13px;color:#fff;font-weight:normal;transform:scaleX(0.965);transform-origin:0 0;">customsearch746</div>
<div class="t" style="left:856px;top:604px;font-size:13px;line-height:13px;color:#fff;font-weight:normal;transform:scaleX(0.95);transform-origin:0 0;">ECOM Web Site Item Status</div>
<div class="t" style="left:1217px;top:604px;font-size:13px;line-height:13px;color:#fff;font-weight:normal;transform:scaleX(0.965);transform-origin:0 0;">Public</div>
<div class="t" style="left:1289px;top:604px;font-size:13px;line-height:13px;color:#84aeec;font-weight:normal;transform:scaleX(0.9);transform-origin:0 0;">Export (CSV)</div>
<div class="t" style="left:1411px;top:604px;font-size:13px;line-height:13px;color:#84aeec;font-weight:normal;transform:scaleX(0.877);transform-origin:0 0;">Persist (CSV)</div>
<div class="t" style="left:1534px;top:604px;font-size:13px;line-height:13px;color:#fff;font-weight:normal;transform:scaleX(0.965);transform-origin:0 0;">No</div>
<div class="t" style="left:1762px;top:604px;font-size:13px;line-height:13px;color:#fff;font-weight:normal;transform:scaleX(0.97);transform-origin:0 0;">8/11/2017 11:40 AM</div>
<div class="r" style="left:0px;top:625px;width:1898px;height:26px;background:#2e2e2e;"></div>
<div class="r" style="left:0px;top:651px;width:1898px;height:1px;background:#0b0b0b;"></div>
<div class="t" style="left:16px;top:631px;font-size:13px;line-height:13px;color:#84aeec;font-weight:normal;transform:scaleX(0.98);transform-origin:0 0;">Edit</div>
<div class="r" style="left:43.2px;top:633px;width:1.6px;height:12px;background:#f2f2f2;"></div>
<div class="t" style="left:50px;top:631px;font-size:13px;line-height:13px;color:#84aeec;font-weight:normal;transform:scaleX(0.97);transform-origin:0 0;">View</div>
<div class="t" style="left:108px;top:631px;font-size:13px;line-height:13px;color:#fff;font-weight:normal;transform:scaleX(0.945);transform-origin:0 0;">Custom ECOM Web Site Transaction Status Default View</div>
<div class="t" style="left:572px;top:631px;font-size:13px;line-height:13px;color:#fff;font-weight:normal;transform:scaleX(0.965);transform-origin:0 0;">customsearch461</div>
<div class="t" style="left:856px;top:631px;font-size:13px;line-height:13px;color:#fff;font-weight:normal;transform:scaleX(0.935);transform-origin:0 0;">ECOM Web Site Transaction Status</div>
<div class="t" style="left:1217px;top:631px;font-size:13px;line-height:13px;color:#fff;font-weight:normal;transform:scaleX(0.965);transform-origin:0 0;">Public</div>
<div class="t" style="left:1289px;top:631px;font-size:13px;line-height:13px;color:#84aeec;font-weight:normal;transform:scaleX(0.9);transform-origin:0 0;">Export (CSV)</div>
<div class="t" style="left:1411px;top:631px;font-size:13px;line-height:13px;color:#84aeec;font-weight:normal;transform:scaleX(0.877);transform-origin:0 0;">Persist (CSV)</div>
<div class="t" style="left:1534px;top:631px;font-size:13px;line-height:13px;color:#fff;font-weight:normal;transform:scaleX(0.965);transform-origin:0 0;">No</div>
<div class="t" style="left:1762px;top:631px;font-size:13px;line-height:13px;color:#fff;font-weight:normal;transform:scaleX(0.97);transform-origin:0 0;">17/7/2017 12:43 PM</div>
<div class="r" style="left:0px;top:652px;width:1898px;height:26px;background:#595959;"></div>
<div class="r" style="left:0px;top:678px;width:1898px;height:1px;background:#0b0b0b;"></div>
<div class="t" style="left:16px;top:658px;font-size:13px;line-height:13px;color:#84aeec;font-weight:normal;transform:scaleX(0.98);transform-origin:0 0;">Edit</div>
<div class="r" style="left:43.2px;top:660px;width:1.6px;height:12px;background:#f2f2f2;"></div>
<div class="t" style="left:50px;top:658px;font-size:13px;line-height:13px;color:#84aeec;font-weight:normal;transform:scaleX(0.97);transform-origin:0 0;">View</div>
<div class="t" style="left:108px;top:658px;font-size:13px;line-height:13px;color:#fff;font-weight:normal;transform:scaleX(0.949);transform-origin:0 0;">Custom Item Search</div>
<div class="t" style="left:572px;top:658px;font-size:13px;line-height:13px;color:#fff;font-weight:normal;transform:scaleX(0.965);transform-origin:0 0;">customsearch912</div>
<div class="t" style="left:856px;top:658px;font-size:13px;line-height:13px;color:#fff;font-weight:normal;transform:scaleX(0.95);transform-origin:0 0;">Item</div>
<div class="t" style="left:1217px;top:658px;font-size:13px;line-height:13px;color:#fff;font-weight:normal;transform:scaleX(0.965);transform-origin:0 0;">Private</div>
<div class="t" style="left:1289px;top:658px;font-size:13px;line-height:13px;color:#84aeec;font-weight:normal;transform:scaleX(0.9);transform-origin:0 0;">Export (CSV)</div>
<div class="t" style="left:1411px;top:658px;font-size:13px;line-height:13px;color:#84aeec;font-weight:normal;transform:scaleX(0.877);transform-origin:0 0;">Persist (CSV)</div>
<div class="t" style="left:1534px;top:658px;font-size:13px;line-height:13px;color:#fff;font-weight:normal;transform:scaleX(0.965);transform-origin:0 0;">No</div>
<div class="t" style="left:1762px;top:658px;font-size:13px;line-height:13px;color:#fff;font-weight:normal;transform:scaleX(0.97);transform-origin:0 0;">6/4/2018 1:01 PM</div>
<div class="r" style="left:0px;top:679px;width:1898px;height:26px;background:#2e2e2e;"></div>
<div class="r" style="left:0px;top:705px;width:1898px;height:1px;background:#0b0b0b;"></div>
<div class="t" style="left:16px;top:685px;font-size:13px;line-height:13px;color:#84aeec;font-weight:normal;transform:scaleX(0.98);transform-origin:0 0;">Edit</div>
<div class="r" style="left:43.2px;top:687px;width:1.6px;height:12px;background:#f2f2f2;"></div>
<div class="t" style="left:50px;top:685px;font-size:13px;line-height:13px;color:#84aeec;font-weight:normal;transform:scaleX(0.97);transform-origin:0 0;">View</div>
<div class="t" style="left:108px;top:685px;font-size:13px;line-height:13px;color:#fff;font-weight:normal;transform:scaleX(0.95);transform-origin:0 0;">Custom Phone Call Default View</div>
<div class="t" style="left:572px;top:685px;font-size:13px;line-height:13px;color:#fff;font-weight:normal;transform:scaleX(0.965);transform-origin:0 0;">customsearchphonecalldefaultview_2</div>
<div class="t" style="left:856px;top:685px;font-size:13px;line-height:13px;color:#fff;font-weight:normal;transform:scaleX(0.95);transform-origin:0 0;">Phone Call</div>
<div class="t" style="left:1217px;top:685px;font-size:13px;line-height:13px;color:#fff;font-weight:normal;transform:scaleX(0.965);transform-origin:0 0;">Private</div>
<div class="t" style="left:1289px;top:685px;font-size:13px;line-height:13px;color:#84aeec;font-weight:normal;transform:scaleX(0.9);transform-origin:0 0;">Export (CSV)</div>
<div class="t" style="left:1411px;top:685px;font-size:13px;line-height:13px;color:#84aeec;font-weight:normal;transform:scaleX(0.877);transform-origin:0 0;">Persist (CSV)</div>
<div class="t" style="left:1534px;top:685px;font-size:13px;line-height:13px;color:#fff;font-weight:normal;transform:scaleX(0.965);transform-origin:0 0;">No</div>
<div class="t" style="left:1762px;top:685px;font-size:13px;line-height:13px;color:#fff;font-weight:normal;transform:scaleX(0.97);transform-origin:0 0;">30/5/2018 1:35 PM</div>
<div class="r" style="left:0px;top:706px;width:1898px;height:26px;background:#595959;"></div>
<div class="r" style="left:0px;top:732px;width:1898px;height:1px;background:#0b0b0b;"></div>
<div class="t" style="left:16px;top:712px;font-size:13px;line-height:13px;color:#84aeec;font-weight:normal;transform:scaleX(0.98);transform-origin:0 0;">Edit</div>
<div class="r" style="left:43.2px;top:714px;width:1.6px;height:12px;background:#f2f2f2;"></div>
<div class="t" style="left:50px;top:712px;font-size:13px;line-height:13px;color:#84aeec;font-weight:normal;transform:scaleX(0.97);transform-origin:0 0;">View</div>
<div class="t" style="left:108px;top:712px;font-size:13px;line-height:13px;color:#fff;font-weight:normal;transform:scaleX(0.943);transform-origin:0 0;">Custom Saved Search Default View</div>
<div class="t" style="left:572px;top:712px;font-size:13px;line-height:13px;color:#fff;font-weight:normal;transform:scaleX(0.965);transform-origin:0 0;">customsearch564_2</div>
<div class="t" style="left:856px;top:712px;font-size:13px;line-height:13px;color:#fff;font-weight:normal;transform:scaleX(0.95);transform-origin:0 0;">Saved Search</div>
<div class="t" style="left:1217px;top:712px;font-size:13px;line-height:13px;color:#fff;font-weight:normal;transform:scaleX(0.965);transform-origin:0 0;">Private</div>
<div class="t" style="left:1289px;top:712px;font-size:13px;line-height:13px;color:#84aeec;font-weight:normal;transform:scaleX(0.9);transform-origin:0 0;">Export (CSV)</div>
<div class="t" style="left:1411px;top:712px;font-size:13px;line-height:13px;color:#84aeec;font-weight:normal;transform:scaleX(0.877);transform-origin:0 0;">Persist (CSV)</div>
<div class="t" style="left:1534px;top:712px;font-size:13px;line-height:13px;color:#fff;font-weight:normal;transform:scaleX(0.965);transform-origin:0 0;">No</div>
<div class="t" style="left:1762px;top:712px;font-size:13px;line-height:13px;color:#fff;font-weight:normal;transform:scaleX(0.97);transform-origin:0 0;">31/5/2018 2:43 PM</div>
<div class="r" style="left:0px;top:733px;width:1898px;height:26px;background:#2e2e2e;"></div>
<div class="r" style="left:0px;top:759px;width:1898px;height:1px;background:#0b0b0b;"></div>
<div class="t" style="left:16px;top:739px;font-size:13px;line-height:13px;color:#84aeec;font-weight:normal;transform:scaleX(0.98);transform-origin:0 0;">Edit</div>
<div class="r" style="left:43.2px;top:741px;width:1.6px;height:12px;background:#f2f2f2;"></div>
<div class="t" style="left:50px;top:739px;font-size:13px;line-height:13px;color:#84aeec;font-weight:normal;transform:scaleX(0.97);transform-origin:0 0;">View</div>
<div class="t" style="left:108px;top:739px;font-size:13px;line-height:13px;color:#fff;font-weight:normal;transform:scaleX(0.928);transform-origin:0 0;">Custom SMS Delivery Receipt Search</div>
<div class="t" style="left:572px;top:739px;font-size:13px;line-height:13px;color:#fff;font-weight:normal;transform:scaleX(0.965);transform-origin:0 0;">customsearch_&nbsp;&nbsp;&nbsp;&nbsp;&nbsp;&nbsp;_sms_event_all</div>
<div class="t" style="left:856px;top:739px;font-size:13px;line-height:13px;color:#fff;font-weight:normal;transform:scaleX(0.95);transform-origin:0 0;">SMS Delivery Receipt</div>
<div class="t" style="left:1217px;top:739px;font-size:13px;line-height:13px;color:#fff;font-weight:normal;transform:scaleX(0.965);transform-origin:0 0;">Public</div>
<div class="t" style="left:1289px;top:739px;font-size:13px;line-height:13px;color:#84aeec;font-weight:normal;transform:scaleX(0.9);transform-origin:0 0;">Export (CSV)</div>
<div class="t" style="left:1411px;top:739px;font-size:13px;line-height:13px;color:#84aeec;font-weight:normal;transform:scaleX(0.877);transform-origin:0 0;">Persist (CSV)</div>
<div class="t" style="left:1534px;top:739px;font-size:13px;line-height:13px;color:#fff;font-weight:normal;transform:scaleX(0.965);transform-origin:0 0;">No</div>
<div class="t" style="left:1762px;top:739px;font-size:13px;line-height:13px;color:#fff;font-weight:normal;transform:scaleX(0.97);transform-origin:0 0;"></div>
<div class="r" style="left:0px;top:760px;width:1898px;height:26px;background:#595959;"></div>
<div class="r" style="left:0px;top:786px;width:1898px;height:1px;background:#0b0b0b;"></div>
<div class="t" style="left:16px;top:766px;font-size:13px;line-height:13px;color:#84aeec;font-weight:normal;transform:scaleX(0.98);transform-origin:0 0;">Edit</div>
<div class="r" style="left:43.2px;top:768px;width:1.6px;height:12px;background:#f2f2f2;"></div>
<div class="t" style="left:50px;top:766px;font-size:13px;line-height:13px;color:#84aeec;font-weight:normal;transform:scaleX(0.97);transform-origin:0 0;">View</div>
<div class="t" style="left:108px;top:766px;font-size:13px;line-height:13px;color:#fff;font-weight:normal;transform:scaleX(0.936);transform-origin:0 0;">Custom SMS Message Default View</div>
<div class="t" style="left:572px;top:766px;font-size:13px;line-height:13px;color:#fff;font-weight:normal;transform:scaleX(0.965);transform-origin:0 0;">customsearch874</div>
<div class="t" style="left:856px;top:766px;font-size:13px;line-height:13px;color:#fff;font-weight:normal;transform:scaleX(0.95);transform-origin:0 0;">SMS Message</div>
<div class="t" style="left:1217px;top:766px;font-size:13px;line-height:13px;color:#fff;font-weight:normal;transform:scaleX(0.965);transform-origin:0 0;">Public</div>
<div class="t" style="left:1289px;top:766px;font-size:13px;line-height:13px;color:#84aeec;font-weight:normal;transform:scaleX(0.9);transform-origin:0 0;">Export (CSV)</div>
<div class="t" style="left:1411px;top:766px;font-size:13px;line-height:13px;color:#84aeec;font-weight:normal;transform:scaleX(0.877);transform-origin:0 0;">Persist (CSV)</div>
<div class="t" style="left:1534px;top:766px;font-size:13px;line-height:13px;color:#fff;font-weight:normal;transform:scaleX(0.965);transform-origin:0 0;">No</div>
<div class="t" style="left:1762px;top:766px;font-size:13px;line-height:13px;color:#fff;font-weight:normal;transform:scaleX(0.97);transform-origin:0 0;">31/5/2018 12:11 PM</div>
<div class="r" style="left:0px;top:787px;width:1898px;height:26px;background:#2e2e2e;"></div>
<div class="r" style="left:0px;top:813px;width:1898px;height:1px;background:#0b0b0b;"></div>
<div class="t" style="left:16px;top:793px;font-size:13px;line-height:13px;color:#84aeec;font-weight:normal;transform:scaleX(0.98);transform-origin:0 0;">Edit</div>
<div class="r" style="left:43.2px;top:795px;width:1.6px;height:12px;background:#f2f2f2;"></div>
<div class="t" style="left:50px;top:793px;font-size:13px;line-height:13px;color:#84aeec;font-weight:normal;transform:scaleX(0.97);transform-origin:0 0;">View</div>
<div class="t" style="left:108px;top:793px;font-size:13px;line-height:13px;color:#fff;font-weight:normal;transform:scaleX(0.969);transform-origin:0 0;">Custom Workflow History Default Sublist View</div>
<div class="t" style="left:572px;top:793px;font-size:13px;line-height:13px;color:#fff;font-weight:normal;transform:scaleX(0.965);transform-origin:0 0;">customsearch911</div>
<div class="t" style="left:856px;top:793px;font-size:13px;line-height:13px;color:#fff;font-weight:normal;transform:scaleX(0.95);transform-origin:0 0;">Workflow History</div>
<div class="t" style="left:1217px;top:793px;font-size:13px;line-height:13px;color:#fff;font-weight:normal;transform:scaleX(0.965);transform-origin:0 0;">Private</div>
<div class="t" style="left:1289px;top:793px;font-size:13px;line-height:13px;color:#84aeec;font-weight:normal;transform:scaleX(0.9);transform-origin:0 0;">Export (CSV)</div>
<div class="t" style="left:1411px;top:793px;font-size:13px;line-height:13px;color:#84aeec;font-weight:normal;transform:scaleX(0.877);transform-origin:0 0;">Persist (CSV)</div>
<div class="t" style="left:1534px;top:793px;font-size:13px;line-height:13px;color:#fff;font-weight:normal;transform:scaleX(0.965);transform-origin:0 0;">No</div>
<div class="t" style="left:1762px;top:793px;font-size:13px;line-height:13px;color:#fff;font-weight:normal;transform:scaleX(0.97);transform-origin:0 0;">28/3/2018 9:37 AM</div>
<div class="r" style="left:0px;top:814px;width:1898px;height:26px;background:#595959;"></div>
<div class="r" style="left:0px;top:840px;width:1898px;height:1px;background:#0b0b0b;"></div>
<div class="t" style="left:16px;top:820px;font-size:13px;line-height:13px;color:#84aeec;font-weight:normal;transform:scaleX(0.98);transform-origin:0 0;">Edit</div>
<div class="r" style="left:43.2px;top:822px;width:1.6px;height:12px;background:#f2f2f2;"></div>
<div class="t" style="left:50px;top:820px;font-size:13px;line-height:13px;color:#84aeec;font-weight:normal;transform:scaleX(0.97);transform-origin:0 0;">View</div>
<div class="t" style="left:108px;top:820px;font-size:13px;line-height:13px;color:#fff;font-weight:normal;transform:scaleX(0.95);transform-origin:0 0;">Customer Base Activity (&nbsp;&nbsp;&nbsp;&nbsp;&nbsp;&nbsp;&nbsp;&nbsp;&nbsp;Weekly WIP Meeting)</div>
<div class="t" style="left:572px;top:820px;font-size:13px;line-height:13px;color:#fff;font-weight:normal;transform:scaleX(0.965);transform-origin:0 0;">customsearch409</div>
<div class="t" style="left:856px;top:820px;font-size:13px;line-height:13px;color:#fff;font-weight:normal;transform:scaleX(0.95);transform-origin:0 0;">Customer</div>
<div class="t" style="left:1217px;top:820px;font-size:13px;line-height:13px;color:#fff;font-weight:normal;transform:scaleX(0.965);transform-origin:0 0;">Public</div>
<div class="t" style="left:1289px;top:820px;font-size:13px;line-height:13px;color:#84aeec;font-weight:normal;transform:scaleX(0.9);transform-origin:0 0;">Export (CSV)</div>
<div class="t" style="left:1411px;top:820px;font-size:13px;line-height:13px;color:#84aeec;font-weight:normal;transform:scaleX(0.877);transform-origin:0 0;">Persist (CSV)</div>
<div class="t" style="left:1534px;top:820px;font-size:13px;line-height:13px;color:#fff;font-weight:normal;transform:scaleX(0.965);transform-origin:0 0;">No</div>
<div class="t" style="left:1762px;top:820px;font-size:13px;line-height:13px;color:#fff;font-weight:normal;transform:scaleX(0.97);transform-origin:0 0;">17/11/2015 10:59 AM</div>
<div class="r" style="left:0px;top:841px;width:1898px;height:26px;background:#2e2e2e;"></div>
<div class="r" style="left:0px;top:867px;width:1898px;height:1px;background:#0b0b0b;"></div>
<div class="t" style="left:16px;top:847px;font-size:13px;line-height:13px;color:#84aeec;font-weight:normal;transform:scaleX(0.98);transform-origin:0 0;">Edit</div>
<div class="r" style="left:43.2px;top:849px;width:1.6px;height:12px;background:#f2f2f2;"></div>
<div class="t" style="left:50px;top:847px;font-size:13px;line-height:13px;color:#84aeec;font-weight:normal;transform:scaleX(0.97);transform-origin:0 0;">View</div>
<div class="t" style="left:108px;top:847px;font-size:13px;line-height:13px;color:#fff;font-weight:normal;transform:scaleX(0.96);transform-origin:0 0;">Customer List (Consolidated)</div>
<div class="t" style="left:572px;top:847px;font-size:13px;line-height:13px;color:#fff;font-weight:normal;transform:scaleX(0.965);transform-origin:0 0;">customsearch201</div>
<div class="t" style="left:856px;top:847px;font-size:13px;line-height:13px;color:#fff;font-weight:normal;transform:scaleX(0.95);transform-origin:0 0;">Transaction</div>
<div class="t" style="left:1217px;top:847px;font-size:13px;line-height:13px;color:#fff;font-weight:normal;transform:scaleX(0.965);transform-origin:0 0;">Public</div>
<div class="t" style="left:1289px;top:847px;font-size:13px;line-height:13px;color:#84aeec;font-weight:normal;transform:scaleX(0.9);transform-origin:0 0;">Export (CSV)</div>
<div class="t" style="left:1411px;top:847px;font-size:13px;line-height:13px;color:#84aeec;font-weight:normal;transform:scaleX(0.877);transform-origin:0 0;">Persist (CSV)</div>
<div class="t" style="left:1534px;top:847px;font-size:13px;line-height:13px;color:#fff;font-weight:normal;transform:scaleX(0.965);transform-origin:0 0;">No</div>
<div class="t" style="left:1762px;top:847px;font-size:13px;line-height:13px;color:#fff;font-weight:normal;transform:scaleX(0.97);transform-origin:0 0;">25/10/2017 2:20 PM</div>
<div class="r" style="left:1898px;top:0px;width:1px;height:867px;background:#fff;"></div>
<div class="r" style="left:0px;top:865px;width:1898px;height:1px;background:#1e1e1e;"></div>
<div class="r" style="left:0px;top:866px;width:1899px;height:1px;background:#fff;"></div>
<div class="r" style="left:447px;top:90px;width:140px;height:407px;background:#2e2e2e;box-shadow:0 0 4px rgba(0,0,0,0.4);"></div>
<div class="r" style="left:447px;top:126px;width:140px;height:1px;background:#33363c;"></div>
<div class="t" style="left:455.5px;top:102px;font-size:14.5px;line-height:14.5px;color:#84a8e6;font-weight:normal;">Lists Overview</div>
<div class="t" style="left:455.5px;top:139px;font-size:14.5px;line-height:14.5px;color:#84a8e6;font-weight:normal;">Accounting</div>
<svg class="r" style="left:567px;top:142px" width="9" height="9" viewBox="0 0 9 9"><path d="M0.5 0.5l8 4 -8 4z" fill="#cfcfcf"/></svg>
<div class="t" style="left:455.5px;top:176px;font-size:14.5px;line-height:14.5px;color:#84a8e6;font-weight:normal;">Supply Chain</div>
<svg class="r" style="left:567px;top:179px" width="9" height="9" viewBox="0 0 9 9"><path d="M0.5 0.5l8 4 -8 4z" fill="#cfcfcf"/></svg>
<div class="t" style="left:455.5px;top:213px;font-size:14.5px;line-height:14.5px;color:#84a8e6;font-weight:normal;">Employees</div>
<svg class="r" style="left:567px;top:216px" width="9" height="9" viewBox="0 0 9 9"><path d="M0.5 0.5l8 4 -8 4z" fill="#cfcfcf"/></svg>
<div class="t" style="left:455.5px;top:250px;font-size:14.5px;line-height:14.5px;color:#84a8e6;font-weight:normal;">Relationships</div>
<svg class="r" style="left:567px;top:253px" width="9" height="9" viewBox="0 0 9 9"><path d="M0.5 0.5l8 4 -8 4z" fill="#cfcfcf"/></svg>
<div class="t" style="left:455.5px;top:287px;font-size:14.5px;line-height:14.5px;color:#84a8e6;font-weight:normal;">Marketing</div>
<svg class="r" style="left:567px;top:290px" width="9" height="9" viewBox="0 0 9 9"><path d="M0.5 0.5l8 4 -8 4z" fill="#cfcfcf"/></svg>
<div class="t" style="left:455.5px;top:324px;font-size:14.5px;line-height:14.5px;color:#84a8e6;font-weight:normal;">Support</div>
<svg class="r" style="left:567px;top:327px" width="9" height="9" viewBox="0 0 9 9"><path d="M0.5 0.5l8 4 -8 4z" fill="#cfcfcf"/></svg>
<div class="t" style="left:455.5px;top:361px;font-size:14.5px;line-height:14.5px;color:#84a8e6;font-weight:normal;">Web Site</div>
<svg class="r" style="left:567px;top:364px" width="9" height="9" viewBox="0 0 9 9"><path d="M0.5 0.5l8 4 -8 4z" fill="#cfcfcf"/></svg>
<div class="t" style="left:455.5px;top:398px;font-size:14.5px;line-height:14.5px;color:#84a8e6;font-weight:normal;">Mailing</div>
<svg class="r" style="left:567px;top:401px" width="9" height="9" viewBox="0 0 9 9"><path d="M0.5 0.5l8 4 -8 4z" fill="#cfcfcf"/></svg>
<div class="r" style="left:447px;top:423px;width:140px;height:37px;background:#585858;"></div>
<div class="t" style="left:455.5px;top:435px;font-size:14.5px;line-height:14.5px;color:#84a8e6;font-weight:normal;">Search</div>
<svg class="r" style="left:567px;top:438px" width="9" height="9" viewBox="0 0 9 9"><path d="M0.5 0.5l8 4 -8 4z" fill="#fff"/></svg>
<div class="t" style="left:455.5px;top:472px;font-size:14.5px;line-height:14.5px;color:#84a8e6;font-weight:normal;">Mass Update</div>
<svg class="r" style="left:567px;top:475px" width="9" height="9" viewBox="0 0 9 9"><path d="M0.5 0.5l8 4 -8 4z" fill="#cfcfcf"/></svg>
<div class="r" style="left:587px;top:423px;width:154px;height:37px;background:#585858;box-shadow:0 2px 3px rgba(0,0,0,0.35);"></div>
<div class="t" style="left:595.5px;top:436px;font-size:13.8px;line-height:13.8px;color:#84a8e6;font-weight:normal;">Saved Searches</div>
<svg class="r" style="left:721px;top:438px" width="9" height="9" viewBox="0 0 9 9"><path d="M0.5 0.5l8 4 -8 4z" fill="#fff"/></svg>
<div class="r" style="left:741px;top:423px;width:45px;height:37px;background:#2e2e2e;box-shadow:0 1px 3px rgba(0,0,0,0.35);"></div>
<div class="t" style="left:750px;top:435px;font-size:14.2px;line-height:14.2px;color:#84a8e6;font-weight:normal;">New</div>
</body></html>
